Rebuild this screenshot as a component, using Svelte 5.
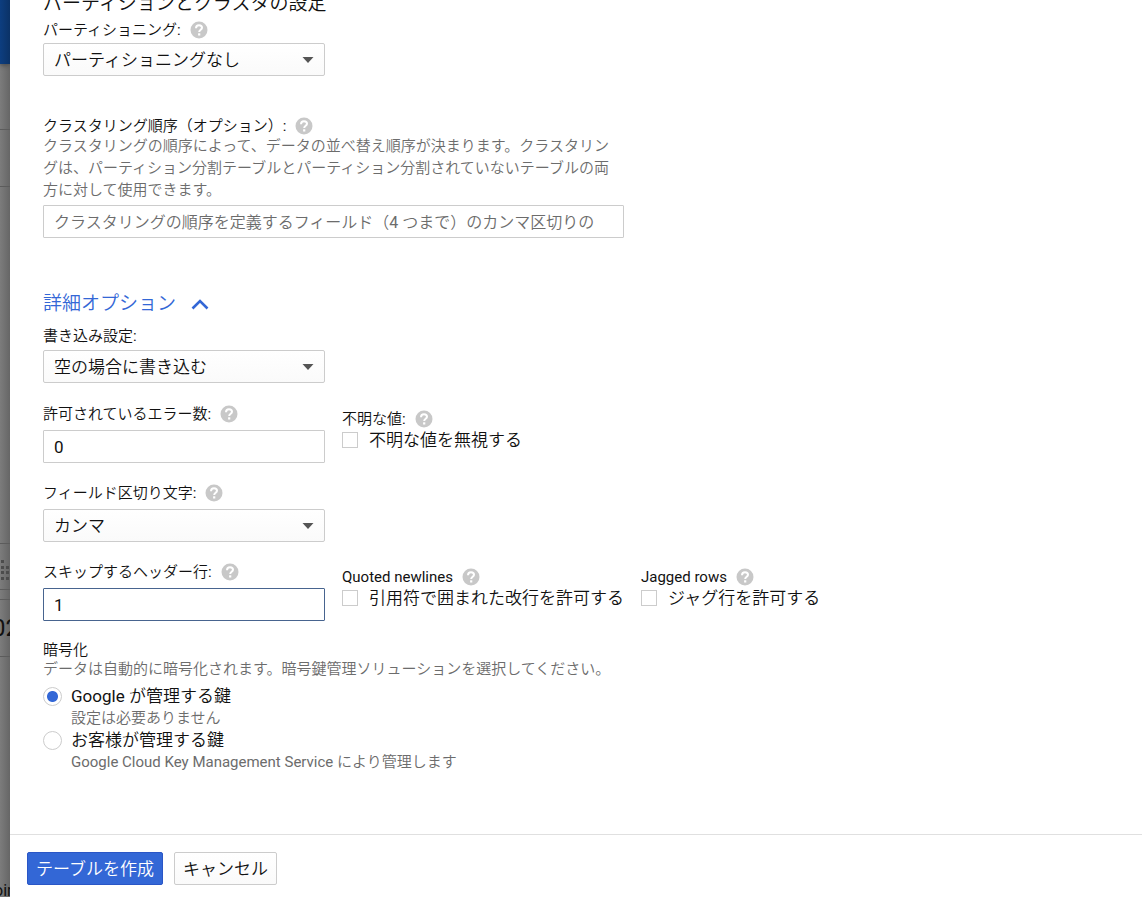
<script>
    let partitioning = 'パーティショニングなし';
    let clustering = '';
    let writePreference = '空の場合に書き込む';
    let errorsAllowed = '0';
    let delimiter = 'カンマ';
    let headerRows = '1';
    let ignoreUnknown = false;
    let quotedNewlines = false;
    let jaggedRows = false;
    let encryption = 'google';
    let showAdvanced = true;

    const partitionOptions = ['パーティショニングなし'];
    const writeOptions = ['空の場合に書き込む'];
    const delimiterOptions = ['カンマ'];

    const keys = [
        { value: 'google', label: 'Google が管理する鍵', hint: '設定は必要ありません' },
        { value: 'customer', label: 'お客様が管理する鍵', hint: 'Google Cloud Key Management Service により管理します' },
    ];

    const toggleAdvanced = () => {
        showAdvanced = !showAdvanced;
    }
</script>

{#snippet help()}
    <svg class="help" viewBox="0 0 18 18" aria-hidden="true">
        <circle cx="9" cy="9" r="8.5" fill="#c8c8c8" />
        <path d="M6 7.2c0-1.8 1.3-2.9 3-2.9s3 1 3 2.5c0 2-2.8 2.1-2.8 4.3" fill="none" stroke="#fff" stroke-width="2" />
        <rect x="8.1" y="12.3" width="2.2" height="2.2" fill="#fff" />
    </svg>
{/snippet}

{#snippet arrow()}
    <svg class="arrow" viewBox="0 0 12 6" aria-hidden="true">
        <path d="M0.5 0h11L6 6z" fill="#555" />
    </svg>
{/snippet}

<div class="page">
    <div class="backdrop">
        <div class="appbar"></div>
        <div class="strip search"></div>
        <div class="strip tabs"></div>
        <div class="strip body"></div>
        <div class="strip toolbar">
            <svg width="10" height="20" viewBox="0 0 10 20" aria-hidden="true">
                <g fill="#4c4c4c">
                    <rect x="1" y="0" width="3" height="3" />
                    <rect x="1" y="6" width="3" height="3" />
                    <rect x="6" y="6" width="3" height="3" />
                    <rect x="1" y="11" width="3" height="3" />
                    <rect x="6" y="11" width="3" height="3" />
                    <rect x="1" y="17" width="3" height="3" />
                    <rect x="6" y="17" width="3" height="3" />
                </g>
            </svg>
        </div>
        <div class="strip gap"></div>
        <div class="strip date">02</div>
        <div class="rest">oin</div>
    </div>

    <form class="drawer" on:submit|preventDefault>
        <div class="content">
            <h2>パーティションとクラスタの設定</h2>

            <div class="field partition">
                <label for="partitioning">パーティショニング: {@render help()}</label>
                <div class="select">
                    <select id="partitioning" bind:value={partitioning}>
                        {#each partitionOptions as option}
                            <option>{option}</option>
                        {/each}
                    </select>
                    {@render arrow()}
                </div>
            </div>

            <div class="cluster">
                <label for="clustering">クラスタリング順序（オプション）: {@render help()}</label>
                <p>クラスタリングの順序によって、データの並べ替え順序が決まります。クラスタリングは、パーティション分割テーブルとパーティション分割されていないテーブルの両方に対して使用できます。</p>
                <input id="clustering" type="text" bind:value={clustering} placeholder="クラスタリングの順序を定義するフィールド（4 つまで）のカンマ区切りの" />
            </div>

            <button type="button" class="toggle" on:click={toggleAdvanced}>
                詳細オプション
                <svg class="chevron" class:closed={!showAdvanced} viewBox="0 0 18 12" aria-hidden="true">
                    <path d="M1.5 10.5L9 3l7.5 7.5" fill="none" stroke="#3367d6" stroke-width="2.6" />
                </svg>
            </button>

            {#if showAdvanced}
                <div class="field write">
                    <label for="write">書き込み設定:</label>
                    <div class="select">
                        <select id="write" bind:value={writePreference}>
                            {#each writeOptions as option}
                                <option>{option}</option>
                            {/each}
                        </select>
                        {@render arrow()}
                    </div>
                </div>

                <div class="row">
                    <div class="field">
                        <label for="errors">許可されているエラー数: {@render help()}</label>
                        <input id="errors" type="text" bind:value={errorsAllowed} />
                    </div>
                    <div class="checks">
                        <div class="caption">不明な値: {@render help()}</div>
                        <label class="check"><input type="checkbox" bind:checked={ignoreUnknown} />不明な値を無視する</label>
                    </div>
                </div>

                <div class="row">
                    <div class="field">
                        <label for="delimiter">フィールド区切り文字: {@render help()}</label>
                        <div class="select">
                            <select id="delimiter" bind:value={delimiter}>
                                {#each delimiterOptions as option}
                                    <option>{option}</option>
                                {/each}
                            </select>
                            {@render arrow()}
                        </div>
                    </div>
                </div>

                <div class="row">
                    <div class="field">
                        <label for="header-rows">スキップするヘッダー行: {@render help()}</label>
                        <input id="header-rows" class="active" type="text" bind:value={headerRows} />
                    </div>
                    <div class="checks">
                        <div class="caption">Quoted newlines {@render help()}</div>
                        <label class="check"><input type="checkbox" bind:checked={quotedNewlines} />引用符で囲まれた改行を許可する</label>
                    </div>
                    <div class="checks">
                        <div class="caption">Jagged rows {@render help()}</div>
                        <label class="check"><input type="checkbox" bind:checked={jaggedRows} />ジャグ行を許可する</label>
                    </div>
                </div>

                <fieldset>
                    <legend>暗号化</legend>
                    <p class="note">データは自動的に暗号化されます。暗号鍵管理ソリューションを選択してください。</p>
                    {#each keys as key (key.value)}
                        <label class="radio">
                            <input type="radio" name="encryption" value={key.value} bind:group={encryption} />
                            <span>{key.label}</span>
                        </label>
                        <p class="hint">{key.hint}</p>
                    {/each}
                </fieldset>
            {/if}
        </div>

        <footer>
            <button type="submit" class="primary">テーブルを作成</button>
            <button type="button" class="secondary">キャンセル</button>
        </footer>
    </form>
</div>

<style>
    :global(body) {
        margin: 0;
        background: #fff;
    }
    .page {
        display: grid;
        grid-template-columns: 10px 1fr;
        height: 100vh;
        overflow: hidden;
        font-family: Roboto, "Noto Sans CJK JP DemiLight", "Noto Sans CJK JP", sans-serif;
        font-size: 15px;
        color: #111;
    }
    .page * {
        box-sizing: border-box;
    }

    /* dimmed page behind the drawer */
    .backdrop {
        display: flex;
        flex-direction: column;
        overflow: hidden;
        background: linear-gradient(to right, #7c7c7c, #666);
        white-space: nowrap;
    }
    .appbar {
        height: 64px;
        background: linear-gradient(to right, #0d3e80, #0b3266);
        box-shadow: 0 1px 5px #444;
    }
    .strip {
        border-bottom: 1px solid #5c5c5c;
    }
    .search {
        height: 66px;
    }
    .tabs {
        height: 57px;
    }
    .body {
        height: 357px;
    }
    .toolbar {
        height: 46px;
        padding-top: 16px;
    }
    .toolbar svg {
        display: block;
    }
    .gap {
        height: 10px;
    }
    .date {
        height: 57px;
        font-size: 24px;
        line-height: 56px;
        text-indent: -8px;
    }
    .rest {
        flex: 1;
        display: flex;
        align-items: flex-end;
        font-size: 16px;
        line-height: 12px;
        text-indent: -6px;
    }

    .drawer {
        display: flex;
        flex-direction: column;
        min-width: 0;
        min-height: 0;
        background: #fff;
    }
    .content {
        flex: 1;
        overflow: hidden;
        padding: 0 33px;
    }
    h2 {
        margin: -8px 0 4px;
        font-size: 19px;
        font-weight: inherit;
        line-height: 24px;
    }
    p {
        margin: 0;
        color: #6c6c6c;
    }
    label,
    .caption {
        display: flex;
        align-items: center;
        line-height: 20px;
    }
    .help {
        width: 18px;
        height: 18px;
        margin-left: 9px;
    }

    .field {
        display: flex;
        flex-direction: column;
        gap: 6px;
        width: 282px;
    }
    .partition {
        gap: 3px;
        margin-bottom: 41px;
    }
    .write {
        gap: 4px;
        margin-bottom: 21px;
    }
    .cluster {
        max-width: 581px;
        margin-bottom: 54px;
    }
    .cluster p {
        max-width: 576px;
        margin-bottom: 4px;
        line-height: 22px;
    }
    .cluster label {
        line-height: 18px;
    }

    input[type="text"],
    select {
        display: block;
        width: 100%;
        height: 33px;
        margin: 0;
        padding: 0 10px;
        border: 1px solid #ccc;
        border-radius: 1px;
        background: #fff;
        color: #111;
        font-family: inherit;
        font-size: 17px;
        font-weight: inherit;
        outline: none;
    }
    input::placeholder {
        color: #6c6c6c;
        font-size: 16px;
        opacity: 1;
    }
    input.active {
        border-color: #47648f;
    }
    .select {
        position: relative;
    }
    select {
        appearance: none;
        border-radius: 2px;
        background: linear-gradient(#fff, #fafafa);
    }
    .arrow {
        position: absolute;
        top: 14px;
        right: 11px;
        width: 12px;
        height: 6px;
        pointer-events: none;
    }

    .toggle {
        display: flex;
        align-items: center;
        gap: 15px;
        margin: 0 0 10px;
        padding: 0;
        border: none;
        background: none;
        color: #3367d6;
        font-family: inherit;
        font-size: 19px;
        line-height: 24px;
        cursor: pointer;
    }
    .chevron {
        width: 18px;
        height: 12px;
    }
    .closed {
        transform: rotate(180deg);
    }

    .row {
        display: grid;
        grid-template-columns: 282px auto auto;
        justify-content: start;
        column-gap: 17px;
        margin-bottom: 20px;
    }
    .checks {
        min-width: 282px;
        padding-top: 5px;
    }
    .check {
        gap: 11px;
        font-size: 17px;
        line-height: 22px;
        white-space: nowrap;
    }
    .check input {
        appearance: none;
        width: 16px;
        height: 16px;
        margin: 0;
        border: 1px solid #ccc;
        background: #fff;
    }
    .check input:checked {
        background: #3367d6;
    }

    fieldset {
        margin: 0;
        padding: 0;
        border: none;
    }
    legend {
        padding: 0;
        line-height: 19px;
    }
    .note {
        margin-bottom: 6px;
        line-height: 19px;
    }
    .radio {
        gap: 9px;
        font-size: 17px;
        line-height: 22px;
    }
    .radio input {
        appearance: none;
        width: 19px;
        height: 19px;
        margin: 0;
        border: 1px solid #ccc;
        border-radius: 50%;
        background: #fff;
    }
    .radio input:checked {
        background: radial-gradient(circle, #3367d6 5px, #fff 6px);
    }
    .hint {
        padding-left: 28px;
        line-height: 22px;
    }

    footer {
        display: flex;
        gap: 11px;
        padding: 17px 17px 12px;
        border-top: 1px solid #e0e0e0;
    }
    footer button {
        height: 33px;
        padding: 0 8px;
        border: 1px solid #ccc;
        border-radius: 2px;
        font-family: inherit;
        font-size: 17px;
        line-height: 22px;
        cursor: pointer;
    }
    .primary {
        border-color: #2a56c6;
        background: #3367d6;
        color: #fff;
    }
    .secondary {
        background: linear-gradient(#fff, #fafafa);
        color: #111;
    }
</style>
